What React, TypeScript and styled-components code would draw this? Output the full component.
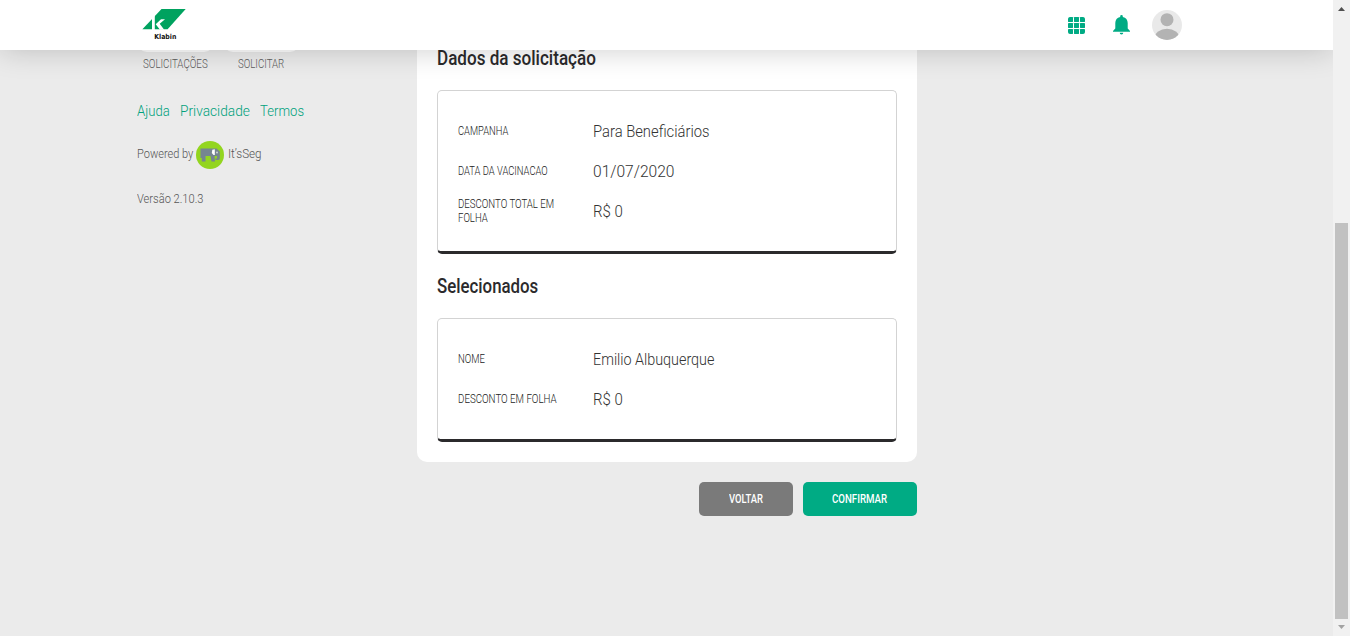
import React, { useLayoutEffect, useRef, useState } from "react";
import styled, { createGlobalStyle } from "styled-components";

const GlobalStyle = createGlobalStyle`
  * { box-sizing: border-box; }
  body {
    margin: 0;
    background: #ebebeb;
    font-family: Roboto, "Liberation Sans", sans-serif;
    overflow: hidden;
  }
`;

const Shell = styled.div`
  display: flex;
  width: 1350px;
  height: 636px;
  overflow: hidden;
`;

const Page = styled.div`
  flex: 1;
  min-width: 0;
  display: flex;
  flex-direction: column;
  background: #ebebeb;
  overflow: hidden;
`;

const Header = styled.header`
  position: relative;
  z-index: 2;
  flex: none;
  display: flex;
  align-items: center;
  justify-content: space-between;
  height: 50px;
  padding: 0 151px 0 140px;
  background: #fff;
  box-shadow: 0 0 30px rgba(0, 0, 0, 0.2);
`;

const Actions = styled.div`
  display: flex;
  align-items: center;
`;

const GridIcon = styled.svg`
  width: 17px;
  height: 17px;
  margin-right: 28px;
  fill: #00ab84;
  border-radius: 2px;
`;

const BellIcon = styled.svg`
  width: 17px;
  height: 20px;
  margin-right: 22px;
  fill: #00ab84;
`;

const Content = styled.main`
  display: flex;
  margin-top: -24px;
  padding-left: 136.5px;
`;

const Sidebar = styled.aside`
  width: 280.5px;
  flex: none;
`;

const Menu = styled.nav`
  display: flex;
  gap: 9px;
`;

const MenuItem = styled.div`
  width: 77px;
  display: flex;
  flex-direction: column;
  align-items: center;
`;

const MenuTile = styled.div`
  width: 77px;
  height: 26px;
  margin-bottom: 1px;
  border-radius: 0 0 10px 10px;
  background: #fff;
`;

const Links = styled.div`
  display: flex;
  gap: 10px;
  margin-top: 27px;
`;

const Powered = styled.div`
  display: flex;
  align-items: flex-start;
  gap: 3.5px;
  height: 28px;
  margin-top: 19px;
  padding-top: 0;
`;

const PoweredText = styled.div`
  padding-top: 3px;
`;

const Version = styled.div`
  margin-top: 20px;
`;

const Column = styled.div`
  width: 500px;
`;

const Card = styled.section`
  padding: 0 20px 20px;
  border-radius: 0 0 10px 10px;
  background: #fff;
`;

const Heading = styled.h2`
  display: flex;
  align-items: center;
  height: 64px;
  margin: 0 0 0 -0.5px;
  padding-top: 2px;
`;

const Panel = styled.div`
  padding: 20px;
  border: 1px solid #d3d3d3;
  border-bottom: 3px solid #2b2a2c;
  border-radius: 5px;
`;

const Row = styled.div`
  display: grid;
  grid-template-columns: 135px 1fr;
  align-items: center;
  height: 40px;
`;

const Buttons = styled.div`
  display: flex;
  justify-content: flex-end;
  gap: 10px;
  margin-top: 20px;
`;

const Button = styled.button<{ $width: number; $color: string }>`
  display: flex;
  align-items: center;
  justify-content: center;
  width: ${(p) => p.$width}px;
  height: 34px;
  padding: 0 1px 0 0;
  border: 0;
  border-radius: 5px;
  background: ${(p) => p.$color};
  font-family: inherit;
`;

const Scrollbar = styled.div`
  flex: none;
  display: flex;
  flex-direction: column;
  align-items: flex-start;
  width: 17px;
  background: #f1f1f1;
`;

const Arrow = styled.svg`
  width: 17px;
  height: 17px;
  flex: none;
`;

const Thumb = styled.div`
  width: 13px;
  height: 396px;
  margin-top: 206px;
  margin-left: 2px;
  background: #c1c1c1;
`;

type Kind = "menu" | "link" | "small" | "heading" | "label" | "value" | "button";

const kinds: Record<Kind, { size: number; line: number; weight: number; color: string }> = {
  menu: { size: 13.5, line: 20, weight: 300, color: "#5c5c5c" },
  link: { size: 15.5, line: 22, weight: 300, color: "#00a17c" },
  small: { size: 13, line: 20, weight: 300, color: "#555" },
  heading: { size: 19.5, line: 26, weight: 500, color: "#2b2a2c" },
  label: { size: 12, line: 14, weight: 300, color: "#222" },
  value: { size: 17, line: 22, weight: 300, color: "#333" },
  button: { size: 12.5, line: 18, weight: 500, color: "#fff" },
};

const TextSlot = styled.span<{ $kind: Kind; $width: number }>`
  display: block;
  flex: none;
  width: ${(p) => p.$width}px;
  font-size: ${(p) => kinds[p.$kind].size}px;
  line-height: ${(p) => kinds[p.$kind].line}px;
  font-weight: ${(p) => kinds[p.$kind].weight};
  color: ${(p) => kinds[p.$kind].color};
  white-space: nowrap;
`;

const TextRun = styled.span`
  display: inline-block;
  vertical-align: top;
  transform-origin: 0 50%;
`;

/* Condenses a line of text horizontally to the given width. */
function Condensed({ kind, width, children }: { kind: Kind; width: number; children: string }) {
  const ref = useRef<HTMLSpanElement>(null);
  const [scale, setScale] = useState(1);
  useLayoutEffect(() => {
    if (ref.current) setScale(width / ref.current.offsetWidth);
  }, [width, children]);
  return (
    <TextSlot $kind={kind} $width={width}>
      <TextRun ref={ref} style={{ transform: `scaleX(${scale})` }}>
        {children}
      </TextRun>
    </TextSlot>
  );
}

const LogoSvg = styled.svg`
  width: 48px;
  height: 38px;
  margin-top: -4px;
`;

function Logo() {
  return (
    <LogoSvg viewBox="140 4 48 38">
      <path d="M161.5 9H185.7L167.6 29.3H142.4Z" fill="#00a25f" />
      <path d="M152 16H154.8V30H152Z" fill="#fff" />
      <path d="M161 19.3H165L159.7 23.8L164.2 29.8H160L155.7 24.2Z" fill="#fff" />
      <text x="154.3" y="39" fontSize="7" fontWeight="700" fontFamily="DejaVu Sans, sans-serif" textLength="22" lengthAdjust="spacingAndGlyphs" fill="#111">
        Klabin
      </text>
    </LogoSvg>
  );
}

function Elephant() {
  return (
    <svg width="28" height="28" viewBox="0 0 28 28">
      <circle cx="14" cy="14" r="14" fill="#93d51f" />
      <path d="M4.5 7.5H20.5L23.8 10.5V18L22.5 19H19.5V17.5H21V15H18.5L19 20.5H15.5L14.5 15H9.5V20.5H5.8V17H4.5Z" fill="#758590" />
      <path d="M16.3 8.7L18.8 8.3V14H17.5L15.8 12Z" fill="#fff" />
      <circle cx="21" cy="11.5" r="0.9" fill="#d5dadd" />
    </svg>
  );
}

function Avatar() {
  return (
    <svg width="30" height="30" viewBox="0 0 30 30">
      <defs>
        <clipPath id="avatar">
          <circle cx="15" cy="15" r="15" />
        </clipPath>
      </defs>
      <g clipPath="url(#avatar)">
        <rect width="30" height="30" fill="#e9e9e9" />
        <circle cx="15" cy="9.7" r="6.5" fill="#b3b3b3" />
        <ellipse cx="15" cy="28" rx="12.5" ry="9.3" fill="#b3b3b3" />
      </g>
    </svg>
  );
}

const request: [string[], number[], string, number][] = [
  [["CAMPANHA"], [50], "Para Beneficiários", 116.5],
  [["DATA DA VACINACAO"], [90], "01/07/2020", 81.5],
  [["DESCONTO TOTAL EM", "FOLHA"], [96.5, 29.5], "R$ 0", 30],
];

const selected: [string[], number[], string, number][] = [
  [["NOME"], [27], "Emilio Albuquerque", 121.5],
  [["DESCONTO EM FOLHA"], [99], "R$ 0", 30],
];

function Details({ rows }: { rows: typeof request }) {
  return (
    <Panel>
      {rows.map(([labels, widths, value, width]) => (
        <Row key={labels[0]}>
          <div>
            {labels.map((l, i) => (
              <Condensed key={l} kind="label" width={widths[i]}>
                {l}
              </Condensed>
            ))}
          </div>
          <Condensed kind="value" width={width}>
            {value}
          </Condensed>
        </Row>
      ))}
    </Panel>
  );
}

export default function App() {
  return (
    <Shell>
      <GlobalStyle />
      <Page>
        <Header>
          <Logo />
          <Actions>
            <GridIcon viewBox="0 0 17 17">
              {[0, 6, 12].map((y) =>
                [0, 6, 12].map((x) => <rect key={`${x}-${y}`} x={x} y={y} width="5" height="5" rx="0.4" />)
              )}
            </GridIcon>
            <BellIcon viewBox="0 0 17 20">
              <path d="M7.2 2V1.3a1.3 1.3 0 0 1 2.6 0V2C13 2.6 14.7 5 14.7 8v5.5L17 16v.8H0V16l2.3-2.5V8C2.3 5 4 2.6 7.2 2ZM6.7 17.8h3.6a1.8 1.6 0 0 1-3.6 0Z" />
            </BellIcon>
            <Avatar />
          </Actions>
        </Header>
        <Content>
          <Sidebar>
            <Menu>
              <MenuItem>
                <MenuTile />
                <Condensed kind="menu" width={65}>SOLICITAÇÕES</Condensed>
              </MenuItem>
              <MenuItem>
                <MenuTile />
                <Condensed kind="menu" width={46.5}>SOLICITAR</Condensed>
              </MenuItem>
            </Menu>
            <Links>
              <Condensed kind="link" width={33}>Ajuda</Condensed>
              <Condensed kind="link" width={70}>Privacidade</Condensed>
              <Condensed kind="link" width={44}>Termos</Condensed>
            </Links>
            <Powered>
              <PoweredText>
                <Condensed kind="small" width={56}>Powered by</Condensed>
              </PoweredText>
              <Elephant />
              <PoweredText>
                <Condensed kind="small" width={34}>It’sSeg</Condensed>
              </PoweredText>
            </Powered>
            <Version>
              <Condensed kind="small" width={66.5}>Versão 2.10.3</Condensed>
            </Version>
          </Sidebar>
          <Column>
            <Card>
              <Heading>
                <Condensed kind="heading" width={158.5}>Dados da solicitação</Condensed>
              </Heading>
              <Details rows={request} />
              <Heading>
                <Condensed kind="heading" width={101}>Selecionados</Condensed>
              </Heading>
              <Details rows={selected} />
            </Card>
            <Buttons>
              <Button $width={94} $color="#7a7a7a">
                <Condensed kind="button" width={34}>VOLTAR</Condensed>
              </Button>
              <Button $width={114} $color="#00ab84">
                <Condensed kind="button" width={55}>CONFIRMAR</Condensed>
              </Button>
            </Buttons>
          </Column>
        </Content>
      </Page>
      <Scrollbar>
        <Arrow viewBox="0 0 17 17">
          <path d="M5 11L8.5 7L12 11Z" fill="#505050" />
        </Arrow>
        <Thumb />
        <Arrow viewBox="0 0 17 17">
          <path d="M5 6L8.5 10L12 6Z" fill="#a3a3a3" />
        </Arrow>
      </Scrollbar>
    </Shell>
  );
}
